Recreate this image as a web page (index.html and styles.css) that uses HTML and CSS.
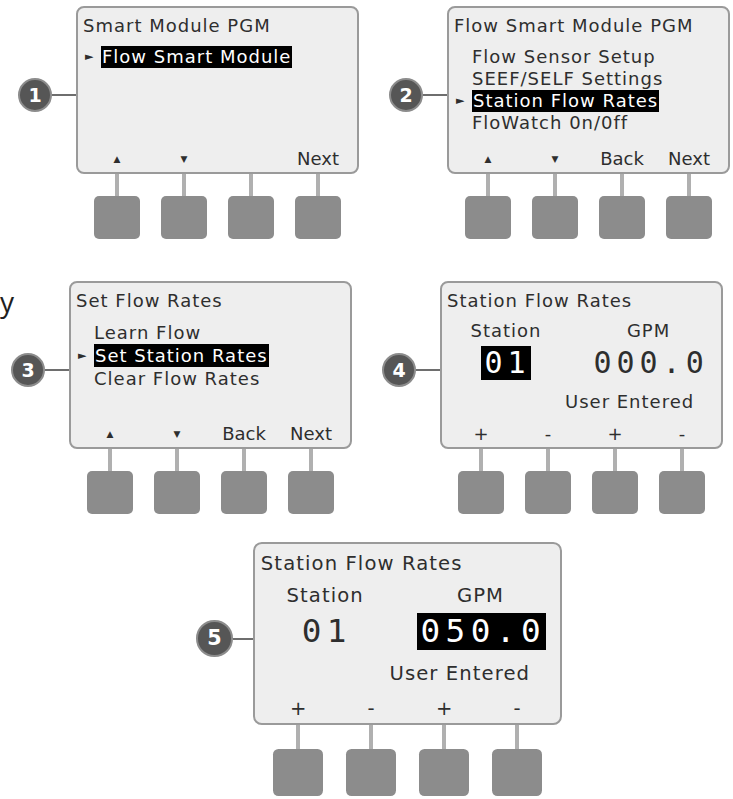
FILE: index.html
```html
<html>
<head>
<title>Flow Smart Module - Station Flow Rates</title>
<link rel="stylesheet" href="styles.css">
</head>
<body>

<div class="row row-1">

<div class="step">
<div class="callout"><div class="badge">1</div><div class="leader"></div></div>
<div class="device">
<div class="screen">
<div class="title">Smart Module PGM</div>
<ul class="menu">
<li class="sel"><span>Flow Smart Module</span></li>
</ul>
<div class="softkeys"><span class="arr">&#9650;</span><span class="arr">&#9660;</span><span></span><span>Next</span></div>
</div>
<div class="keys"><div class="key"></div><div class="key"></div><div class="key"></div><div class="key"></div></div>
</div>
</div>

<div class="step">
<div class="callout"><div class="badge">2</div><div class="leader"></div></div>
<div class="device">
<div class="screen">
<div class="title">Flow Smart Module PGM</div>
<ul class="menu">
<li><span>Flow Sensor Setup</span></li>
<li><span>SEEF/SELF Settings</span></li>
<li class="sel"><span>Station Flow Rates</span></li>
<li><span>FloWatch 0n/0ff</span></li>
</ul>
<div class="softkeys"><span class="arr">&#9650;</span><span class="arr">&#9660;</span><span>Back</span><span>Next</span></div>
</div>
<div class="keys"><div class="key"></div><div class="key"></div><div class="key"></div><div class="key"></div></div>
</div>
</div>

</div>

<div class="row row-2">

<div class="stray">y</div>

<div class="step">
<div class="callout"><div class="badge">3</div><div class="leader"></div></div>
<div class="device">
<div class="screen">
<div class="title">Set Flow Rates</div>
<ul class="menu menu-wide">
<li><span>Learn Flow</span></li>
<li class="sel"><span>Set Station Rates</span></li>
<li><span>Clear Flow Rates</span></li>
</ul>
<div class="softkeys"><span class="arr">&#9650;</span><span class="arr">&#9660;</span><span>Back</span><span>Next</span></div>
</div>
<div class="keys"><div class="key"></div><div class="key"></div><div class="key"></div><div class="key"></div></div>
</div>
</div>

<div class="step">
<div class="callout"><div class="badge">4</div><div class="leader"></div></div>
<div class="device">
<div class="screen">
<div class="title">Station Flow Rates</div>
<div class="rates">
<div class="lbl">Station</div>
<div class="lbl lbl-gpm">GPM</div>
<div class="val"><span class="num hl">01</span></div>
<div class="val val-gpm"><span class="num">000.0</span></div>
<div></div>
<div class="note">User Entered</div>
</div>
<div class="softkeys"><span>+</span><span>-</span><span>+</span><span>-</span></div>
</div>
<div class="keys"><div class="key"></div><div class="key"></div><div class="key"></div><div class="key"></div></div>
</div>
</div>

</div>

<div class="row row-3">

<div class="step step-big">
<div class="callout"><div class="badge">5</div><div class="leader"></div></div>
<div class="device">
<div class="screen">
<div class="title">Station Flow Rates</div>
<div class="rates">
<div class="lbl">Station</div>
<div class="lbl lbl-gpm">GPM</div>
<div class="val"><span class="num">01</span></div>
<div class="val val-gpm"><span class="num hl">050.0</span></div>
<div></div>
<div class="note">User Entered</div>
</div>
<div class="softkeys"><span>+</span><span>-</span><span>+</span><span>-</span></div>
</div>
<div class="keys"><div class="key"></div><div class="key"></div><div class="key"></div><div class="key"></div></div>
</div>
</div>

</div>

</body>
</html>
```

FILE: styles.css
```css
body{
margin: 0;
background: #fff;
font-family: "DejaVu Sans", Verdana, sans-serif;
color: #2e2e2e;
}
.row{
display: flex;
align-items: flex-start;
}
.row-1{
padding: 6px 0 0 18px;
}
.row-2{
margin-top: 42px;
}
.row-3{
margin-top: 28px;
padding-left: 196px;
}
.step + .step{
margin-left: 30px;
}
.step{
display: flex;
align-items: flex-start;
}
.step-big{
zoom: 1.09;
}

/* the gray numbered circle and its line to the screen */
.callout{
display: flex;
align-items: center;
margin-top: 72px;
}
.badge{
width: 30px;
height: 30px;
border: 2px solid #8c8c8c;
border-radius: 50%;
background: #565656;
color: #fff;
font-weight: bold;
font-size: 19px;
line-height: 30px;
text-align: center;
}
.leader{
width: 24px;
height: 2px;
background: #6e6e6e;
}
.step-big .leader{
width: 19px;
}

.device{
width: 283px;
}
.screen{
height: 168px;
box-sizing: border-box;
border: 2px solid #9a9a9a;
border-radius: 8px;
background: #eeeeee;
padding: 7px 5px 2px;
display: flex;
flex-direction: column;
font-size: 18px;
letter-spacing: 1px;
line-height: 22px;
}
.title{
white-space: nowrap;
}

.menu{
list-style-type: none;
margin: 9px 0 0;
padding: 0;
}
.menu li{
display: flex;
white-space: nowrap;
}
.menu li::before{
content: "";
width: 18px;
flex: none;
}
.menu li.sel::before{
content: "\25BA";
font-size: 11px;
padding-left: 2px;
width: 16px;
}
.menu li.sel span{
background: #000;
color: #fff;
padding: 0 1px;
}
.menu-wide li{
line-height: 23px;
}

/* two column value screen */
.rates{
display: grid;
grid-template-columns: 118px 1fr;
margin-top: 8px;
text-align: center;
}
.lbl-gpm{
padding-left: 8px;
}
.val{
margin-top: 4px;
height: 34px;
}
.val-gpm{
padding-left: 10px;
}
.num{
display: inline-block;
font-family: "DejaVu Sans Mono", monospace;
font-size: 30px;
line-height: 34px;
letter-spacing: 5px;
padding-left: 3px;
}
.hl{
background: #000;
color: #fff;
}
.note{
margin-top: 11px;
padding-right: 30px;
white-space: nowrap;
}

/* labels over the four buttons */
.softkeys{
margin-top: auto;
display: grid;
grid-template-columns: repeat(4, 46px);
column-gap: 21px;
justify-content: center;
text-align: center;
letter-spacing: 0;
}
.softkeys .arr{
font-size: 9px;
}

.keys{
display: flex;
justify-content: center;
gap: 21px;
}
.key{
display: flex;
flex-direction: column;
align-items: center;
width: 46px;
}
.key::before{
content: "";
width: 4px;
height: 22px;
background: #b0b0b0;
}
.key::after{
content: "";
width: 46px;
height: 43px;
border-radius: 5px;
background: #8c8c8c;
}

.stray{
width: 11px;
margin-top: 6px;
font-family: "Open Sans", sans-serif;
font-size: 28px;
line-height: 1;
color: #1e1e1e;
}
```
